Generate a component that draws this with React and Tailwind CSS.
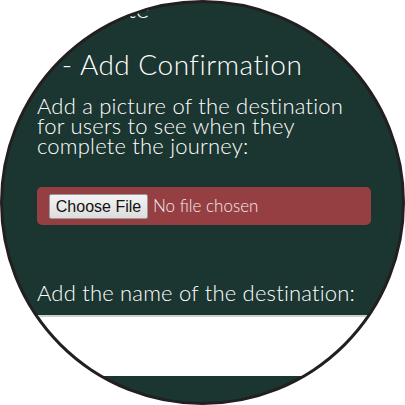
import React from 'react';

const font = { fontFamily: 'Lato, "Open Sans", sans-serif' };

const App = () => {
  return (
    <div className='w-[405px] h-[405px] bg-white'>
      <div
        className='w-[405px] h-[405px] rounded-full border-[3px] border-[#231f20] bg-[#1b3530] overflow-hidden text-white font-light'
        style={font}
      >
        <div className='flex flex-col pl-[34px] pr-[31px]'>
          {/* previous step title, mostly cut off by the round screen */}
          <p className='text-[26px] leading-[26px] mt-[-8px] pl-[38px]'>Create</p>

          <h1 className='text-[28px] leading-[32px] mt-[27px] tracking-[0.5px]'>5 - Add Confirmation</h1>

          <p className='text-[22px] leading-[20px] mt-[16px] tracking-[0.2px]'>
            Add a picture of the destination
            <br />
            for users to see when they
            <br />
            complete the journey:
          </p>

          <div className='mt-[31px] h-[38px] rounded-[5px] bg-[#963f43] flex items-center pl-[12px] gap-[5px]'>
            <button
              className='h-[25px] w-[99px] rounded-[2px] border border-[#9a9a9a] bg-gradient-to-b from-[#f4f4f4] to-[#dddddd] text-[16px] text-[#111] font-normal'
              style={{ fontFamily: '"Liberation Sans", Arial, sans-serif' }}
            >
              Choose File
            </button>
            <span className='text-[17px] text-[#f5eaea]'>No file chosen</span>
          </div>

          <label className='text-[22px] leading-[20px] mt-[58px] tracking-[0.2px]'>
            Add the name of the destination:
          </label>

          <input
            type='text'
            className='mt-[12px] h-[61px] w-full bg-white border-t-2 border-[#cfcfcf] outline-none'
          />
        </div>
      </div>
    </div>
  );
};

export default App;
